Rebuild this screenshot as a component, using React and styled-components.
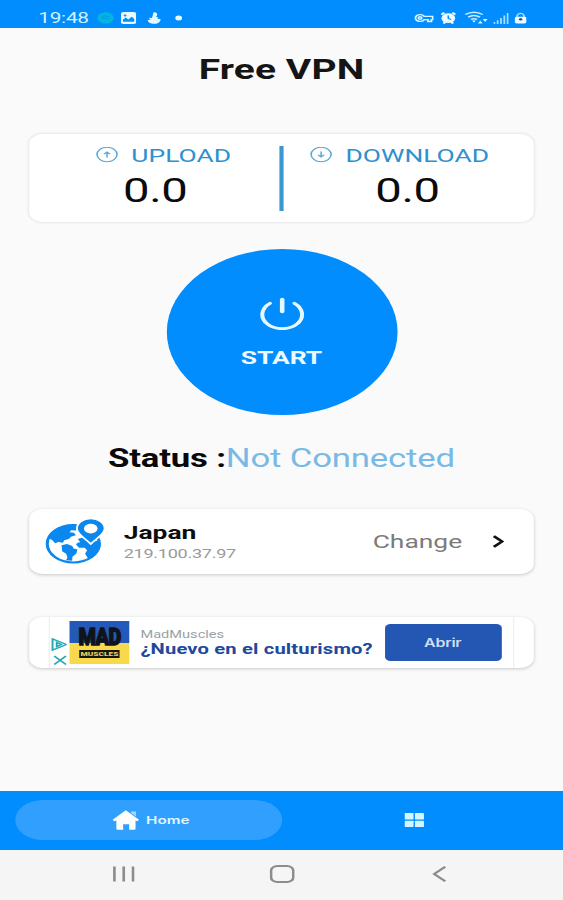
import React from 'react'
import styled, { createGlobalStyle } from 'styled-components';

const GlobalStyle = createGlobalStyle`
    * {
        box-sizing: border-box;
    }

    body {
        margin: 0;
        overflow: hidden;
        background: #fafafa;
        font-family: Roboto, "Liberation Sans", sans-serif;
    }

    h1, p {
        margin: 0;
    }

    svg {
        display: block;
    }
`;

function StatusBar() {
    return (
        <StatusBarStyled>
            <Clock>19:48</Clock>
            <StatusIcon $gap={5.5} width="12" height="12" viewBox="0 0 12 12">
                <circle cx="6" cy="6" r="5.8" fill="#02b6dc" />
                <path d="M3 4.4q3-1 6 .5M3.3 6.6q2.7-.8 5 .5" fill="none" stroke="#0498e8" strokeWidth="1" />
            </StatusIcon>
            <StatusIcon $gap={5.5} width="11" height="12" viewBox="0 0 11 12">
                <rect width="11" height="12" rx="1.8" fill="#e9faff" />
                <path d="M1.5 9.8V7.6l2-2 1.8 1.8 2.4-2.6 1.9 2.2v2.8z" fill="#078ff5" />
                <circle cx="3" cy="3.4" r="1" fill="#078ff5" />
            </StatusIcon>
            <StatusIcon $gap={7.5} width="10" height="12" viewBox="0 0 10 12">
                <path d="M4.500.2c1.800-.2 2.800 1.200 2.500 2.800L6.300 5l1.500.3-.6 1.400 2.300.2c0 2.800-1.700 4.900-4.500 4.900C2.300 11.800.3 10.300.2 8l2.100-.2L1 5.800l2.300.2z" fill="#e3f8ff" />
            </StatusIcon>
            <StatusIcon $gap={10.5} width="5" height="6" viewBox="0 0 5 6">
                <circle cx="2.500" cy="3" r="2.500" fill="#e9faff" />
            </StatusIcon>
            <Spacer />
            <StatusIcon width="14" height="10" viewBox="0 0 14 10">
                <g fill="none" stroke="#d5f2ff" strokeWidth="1.400">
                    <path d="M7.200 3.400H13.300v3.200h-1v1.900H9.800V6.600H7.200a3.400 3.400 0 1 1 0-3.200z" />
                    <circle cx="4.200" cy="5" r="1.200" />
                </g>
            </StatusIcon>
            <StatusIcon $gap={5.5} width="11" height="12" viewBox="0 0 11 12">
                <path d="M.5 2.600L2.600.7M10.500 2.600L8.400.7M2 11.500l1.500-1.700M9 11.500L7.500 9.800" stroke="#e9faff" strokeWidth="1.800" />
                <circle cx="5.500" cy="6.200" r="4.900" fill="#e9faff" />
                <path d="M5.500 3.500v3l2 .9" fill="none" stroke="#078ff5" strokeWidth="1.100" />
            </StatusIcon>
            <StatusIcon $gap={6} width="17" height="13" viewBox="0 0 17 13">
                <g fill="none" stroke="#c5ecff" strokeWidth="1.500">
                    <path d="M.7 3.500q6.300-4.700 12.600 0M2.800 6.100q4.200-3.400 8.400 0M4.800 8.500q2.200-1.700 4.400 0" />
                </g>
                <path d="M5.500 9.500h3L7 11.500zM9.800 12.500l1.700-3 1.700 3zM13.200 8h3.600L15 11z" fill="#d5f2ff" />
            </StatusIcon>
            <StatusIcon $gap={3.5} width="11" height="12" viewBox="0 0 11 12">
                <path d="M.6 12v-2M3 12V8.300M5.400 12V6M7.800 12V3.500M10.200 12V1" stroke="#a5ddff" strokeWidth="1.300" />
            </StatusIcon>
            <StatusIcon $gap={4.5} width="9" height="12" viewBox="0 0 10 12">
                <path d="M2.300 5.500V3.600a2.700 2.700 0 0 1 5.400 0v1.900" fill="none" stroke="#9fdcff" strokeWidth="1.400" />
                <rect x=".4" y="4.500" width="9.200" height="7.500" rx="1.500" fill="#edfaff" />
                <circle cx="5" cy="7.500" r="1.300" fill="#20455f" />
            </StatusIcon>
        </StatusBarStyled>
    )
}

function Meter({ label, up }) {
    return (
        <MeterStyled $up={up}>
            <div className="label">
                <svg width="16" height="16" viewBox="0 0 16 16" fill="none" stroke="#5ba7d2" strokeWidth="1.100">
                    <circle cx="8" cy="7.500" r="7.200" />
                    {up
                        ? <path d="M8 10.500V5M5.800 7.200L8 5l2.200 2.200" />
                        : <path d="M8 4.500V10M5.800 7.800L8 10l2.200-2.200" />}
                </svg>
                <span>{label}</span>
            </div>
            <p>0.0</p>
        </MeterStyled>
    )
}

function GlobeIcon() {
    return (
        <svg width="44" height="46" viewBox="0 0 44 46">
            <circle cx="20.700" cy="25.800" r="18.700" fill="#fff" stroke="#0b88ef" strokeWidth="2.200" />
            <g fill="#0b88ef">
                <path d="M2.800 20C5 12.500 12 7 22.500 6.700l1.800 3.800-1.700 2-3.400-.3-1.200 2 3.200.6 1.400 2.400-3.200 1.200-2 2.500-3.200 1.300-1 2.600-3.200-.8-2.300 1.200-2.200-3.200z" />
                <path d="M12.300 27.300l3.900-1.300 3.800 2 .9 2.400 2.800 1.200-.8 4-2.800 3.200-.2 4-4.400-.6 1-2.600-.9-3.800-2.900-2.600z" />
                <path d="M24 21l3.500-1.500 3.200 1.500 2 3.600 7-2.500.8 3.600c0 7-3.800 12.700-8.700 15.600l-2.600-5.600 1.500-3.400-1.800-2.600-4 .1-2.300-3.500 1.700-1.700 1.400-.4z" />
            </g>
            <path d="M33.300.5a10 10 0 0 1 10 10c0 5.800-6 9.600-10 15.500-4-5.900-10-9.700-10-15.500a10 10 0 0 1 10-10z" fill="#0b88ef" stroke="#fff" strokeWidth="1.400" />
            <circle cx="33.300" cy="10.600" r="4.900" fill="#fff" />
        </svg>
    )
}

function Advert() {
    return (
        <AdCard>
            <div className="ad">
                <svg className="choices" width="12" height="30" viewBox="0 0 12 30" fill="none" stroke="#20a9b4" strokeWidth="1.400">
                    <path d="M1.800 2v11l10-5.500zM4.800 5.500v4L8 7.500z" />
                    <path d="M3 19l8.500 8.500M11.500 19L3 27.500" />
                </svg>
                <AdLogo>
                    <b>MAD</b>
                    <small>MUSCLES</small>
                </AdLogo>
                <div className="copy">
                    <span>MadMuscles</span>
                    <strong>¿Nuevo en el culturismo?</strong>
                </div>
                <button>Abrir</button>
            </div>
        </AdCard>
    )
}

function App() {
    return (
        <Screen>
            <GlobalStyle />
            <StatusBar />
            <Title>Free VPN</Title>
            <SpeedCard>
                <Meter label="UPLOAD" up />
                <div className="line"></div>
                <Meter label="DOWNLOAD" />
            </SpeedCard>
            <StartButton>
                <svg width="32" height="33" viewBox="0 0 32 33" fill="none" stroke="#e6f8ff" strokeWidth="2.900" strokeLinecap="round">
                    <path d="M7.200 6.300a14.300 14.200 0 1 0 17.600 0" />
                    <path d="M16 2.500v12" strokeWidth="3.300" />
                </svg>
                <span>START</span>
            </StartButton>
            <Status>
                <b>Status :</b><span>Not Connected</span>
            </Status>
            <ServerCard>
                <GlobeIcon />
                <div className="server">
                    <b>Japan</b>
                    <span>219.100.37.97</span>
                </div>
                <span className="change">Change</span>
                <svg width="9" height="13" viewBox="0 0 9 14" fill="none" stroke="#111" strokeWidth="2.500">
                    <path d="M1 1.200L7.300 7 1 12.800" />
                </svg>
            </ServerCard>
            <Advert />
            <Spacer />
            <TabBar>
                <Tab $active>
                    <svg width="19" height="20" viewBox="0 0 19 20" fill="#fff">
                        <path d="M9.500.3L19 9.700l-1.200 1.500-1.300-.8v8.300q0 1-1 1h-3.600v-5.500H7.600v5.500H3.700q-1 0-1-1v-8.300l-1.500.8L0 9.700z" />
                        <path d="M13.300 1.500h3.500v5l-3.500-3.400z" opacity=".6" />
                    </svg>
                    <span>Home</span>
                </Tab>
                <Tab>
                    <svg width="14" height="14" viewBox="0 0 14 14" fill="#d3f5ff">
                        <rect width="6.500" height="6.500" rx=".6" />
                        <rect x="7.500" width="6.500" height="6.500" rx=".6" />
                        <rect y="7.700" width="6.500" height="6.300" rx=".6" />
                        <rect x="7.500" y="7.700" width="6.500" height="6.300" rx=".6" />
                    </svg>
                </Tab>
            </TabBar>
            <SystemNav>
                <svg width="16" height="16" viewBox="0 0 16 16">
                    <path d="M1.300 .5v15M8 .5v15M14.700 .5v15" />
                </svg>
                <svg width="18" height="18" viewBox="0 0 18 18">
                    <rect x="1" y="1" width="16" height="16" rx="4.500" />
                </svg>
                <svg width="10" height="16" viewBox="0 0 10 16">
                    <path d="M9.300 .8L1.300 8l8 7.200" />
                </svg>
            </SystemNav>
        </Screen>
    )
}

// 405px wide phone layout, widened to fill the 563px window
const Screen = styled.div`
    width: 405px;
    height: 900px;
    display: flex;
    flex-direction: column;
    align-items: center;
    background: #fafafa;
    transform: scaleX(1.3901);
    transform-origin: 0 0;
`;

const Spacer = styled.div`
    flex: 1;
`;

const StatusBarStyled = styled.header`
    width: 100%;
    height: 28px;
    flex: none;
    display: flex;
    align-items: center;
    padding: 7px 26px 0 27.500px;
    background: #018dfe;
`;

const Clock = styled.span`
    width: 36.500px;
    font-size: 15px;
    line-height: 18px;
    letter-spacing: -.2px;
    color: #d2f1ff;
`;

const StatusIcon = styled.svg`
    flex: none;
    margin-left: ${props => props.$gap || 0}px;
`;

const Title = styled.h1`
    margin-top: 25px;
    height: 34px;
    font-size: 28px;
    line-height: 34px;
    font-weight: 700;
    letter-spacing: .1px;
    color: #151515;
`;

const Card = styled.section`
    width: 363px;
    flex: none;
    display: flex;
    background: #fff;
    border-radius: 10px;
    box-shadow: 0 1px 3px rgba(0, 0, 0, .2);
`;

const SpeedCard = styled(Card)`
    margin-top: 47px;
    height: 88px;
    box-shadow: 0 0 3px rgba(0, 0, 0, .14);

    .line{
        width: 3px;
        height: 65px;
        margin-top: 12px;
        background: #3c97d0;
    }
`;

const MeterStyled = styled.div`
    width: 180px;
    padding-top: 10px;

    .label{
        display: flex;
        align-items: center;
        height: 22px;
        padding-left: ${props => props.$up ? 48 : 19}px;
        font-size: 19px;
        color: #2e90cf;

        span{
            margin-left: 9.500px;
        }
    }

    p{
        height: 46px;
        padding-left: ${props => props.$up ? 67.5 : 66}px;
        font-size: 34px;
        line-height: 48px;
        letter-spacing: -.3px;
        color: #0b0b0b;
    }
`;

const StartButton = styled.button`
    width: 166px;
    height: 166px;
    flex: none;
    margin-top: 27px;
    padding: 48px 0 0;
    display: flex;
    flex-direction: column;
    align-items: center;
    border: 0;
    border-radius: 50%;
    background: #018dfe;
    color: #eefaff;
    font-family: inherit;

    span{
        margin-top: 15px;
        font-size: 19px;
        line-height: 25px;
        font-weight: 700;
    }
`;

const Status = styled.p`
    margin-top: 28px;
    height: 32px;
    font-size: 25px;
    line-height: 32px;
    letter-spacing: -.13px;
    white-space: nowrap;

    b{
        color: #090909;
    }

    span{
        color: #79b9e5;
    }
`;

const ServerCard = styled(Card)`
    margin-top: 34px;
    height: 65px;
    align-items: center;
    padding: 0 21px 0 10.500px;

    > svg:first-child{
        margin-bottom: 2px;
    }

    .server{
        flex: 1;
        display: flex;
        flex-direction: column;
        padding: 2px 0 0 13.500px;

        b{
            font-size: 19px;
            line-height: 23px;
            color: #0d0d0d;
        }

        span{
            font-size: 13px;
            line-height: 20px;
            letter-spacing: -.2px;
            color: #9a9a9a;
        }
    }

    .change{
        margin-right: 21.500px;
        font-size: 19px;
        color: #7b7b7b;
    }
`;

const AdCard = styled(Card)`
    margin-top: 43px;
    height: 51px;
    justify-content: center;

    .ad{
        width: 335px;
        display: flex;
        border: solid #f0f0f0;
        border-width: 0 1px;
    }

    .choices{
        margin-top: 20px;
    }

    .copy{
        flex: 1;
        display: flex;
        flex-direction: column;
        padding: 11px 0 0 8px;
        white-space: nowrap;

        span{
            font-size: 10.500px;
            line-height: 13px;
            color: #9a9fa8;
        }

        strong{
            font-size: 14.500px;
            line-height: 18px;
            letter-spacing: .12px;
            color: #21499b;
        }
    }

    button{
        width: 84px;
        height: 37px;
        margin: 7px 8.500px 0 0;
        padding: 0;
        border: 0;
        border-radius: 4px;
        background: #2456b3;
        color: #d0def7;
        font: 600 11.500px Inter, sans-serif;
        letter-spacing: -.2px;
    }
`;

const AdLogo = styled.div`
    width: 43px;
    height: 43px;
    margin: 4px 0 0 2px;
    display: flex;
    flex-direction: column;
    align-items: center;
    background: linear-gradient(#2459b9 50%, #f7d94b 50%);

    b{
        margin-top: 5px;
        height: 24px;
        font: 900 23px/23px Roboto, sans-serif;
        letter-spacing: -.5px;
        color: #10131a;
        transform: scaleX(.62);
        -webkit-text-stroke: 1.300px #10131a;
    }

    small{
        width: 29px;
        height: 8px;
        background: #17160f;
        color: #e9d062;
        font-size: 6px;
        line-height: 8px;
        font-weight: 900;
        text-align: center;
    }
`;

const TabBar = styled.nav`
    width: 100%;
    height: 59px;
    flex: none;
    display: flex;
    align-items: center;
    padding: 0 11px 1px;
    background: #018dfe;
`;

const Tab = styled.div`
    width: 50%;
    height: 40px;
    display: flex;
    align-items: center;
    justify-content: center;
    padding-left: ${props => props.$active ? 4 : 0}px;
    border-radius: 20px;
    background: ${props => props.$active ? '#309ffe' : 'transparent'};

    span{
        margin-left: 5px;
        font: 600 11px Inter, sans-serif;
        color: #e3f8ff;
    }
`;

const SystemNav = styled.footer`
    width: 100%;
    height: 50px;
    flex: none;
    display: flex;
    align-items: center;
    justify-content: space-between;
    padding: 0 84px 2px 81px;
    background: #f5f5f5;

    svg{
        fill: none;
        stroke: #8c8c8c;
        stroke-width: 1.900;
    }

    svg:nth-child(2){
        margin-right: 2px;
    }
`;

export default App;
